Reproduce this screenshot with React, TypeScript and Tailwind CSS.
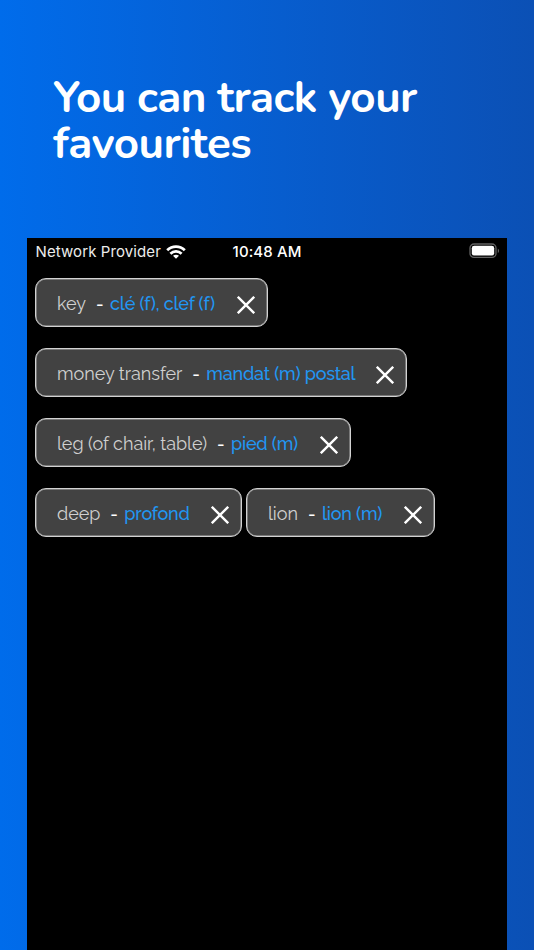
import React from 'react';

interface Favourite {
  word: string;
  translation: string;
  width: string;
}

const rows: Favourite[][] = [
  [{ word: 'key', translation: 'clé (f), clef (f)', width: 'w-[233px]' }],
  [{ word: 'money transfer', translation: 'mandat (m) postal', width: 'w-[372px]' }],
  [{ word: 'leg (of chair, table)', translation: 'pied (m)', width: 'w-[316px]' }],
  [
    { word: 'deep', translation: 'profond', width: 'w-[207px]' },
    { word: 'lion', translation: 'lion (m)', width: 'w-[189px]' },
  ],
];

const WifiIcon = () => (
  <svg viewBox="0 0 20 14" className="ml-[5px] h-[14px] w-[20px]" fill="none" stroke="white" strokeWidth="2.8">
    <path d="M1.2 5.2C6.2.4 13.8.4 18.8 5.2M4.4 8.7c3.2-3 8-3 11.2 0" />
    <path d="M10 13.8l-3-3c1.7-1.5 4.3-1.5 6 0z" fill="white" stroke="none" />
  </svg>
);

const BatteryIcon = () => (
  <svg viewBox="0 0 32 16" className="h-[16px] w-[32px]" fill="none">
    <rect x="1" y="1" width="26" height="13.4" rx="4" stroke="#626262" strokeWidth="1.3" />
    <rect x="2.8" y="2.8" width="22.4" height="9.8" rx="2.4" fill="white" />
    <path d="M28.8 5.4c1.7.8 1.7 3.8 0 4.6z" fill="#626262" />
  </svg>
);

const Chip: React.FC<{ item: Favourite }> = ({ item }) => (
  <div className={`flex h-[49px] shrink-0 items-center rounded-[11px] border border-[#d2d2d2] bg-[#424242] pt-[1px] pl-[21px] text-[18px] whitespace-nowrap inset-shadow-[0_0_0_0.5px_#b0b0b0] ${item.width}`}>
    <span className="tracking-[-0.03px] text-[#d0d0d0]">{item.word}</span>
    <span className="ml-[10px] w-[14px] font-medium text-white">-</span>
    <span className="font-medium tracking-[-0.22px] text-[#2196f3]">{item.translation}</span>
    <svg viewBox="0 0 18 18" className="mt-[4px] mr-[12.5px] ml-auto h-[18px] w-[18px] shrink-0" fill="none" stroke="white" strokeWidth="2.4">
      <path d="M.8.8l16.4 16.4M17.2.8L.8 17.2" />
    </svg>
  </div>
);

const App: React.FC = () => (
  <div className="flex h-[950px] w-[534px] flex-col overflow-hidden bg-linear-to-r from-[#006ceb] to-[#0b50b5]">
    <h1 className="h-[238px] pt-[75px] pl-[53px] font-[Nunito,Lato,sans-serif] text-[44px] leading-[46px] font-bold tracking-[-0.55px] text-white">
      You can track your
      <br />
      favourites
    </h1>
    <main className="mx-[27px] flex-1 bg-black font-[Raleway,Lato,sans-serif]">
      {/* Status Bar */}
      <div className="grid h-[40px] grid-cols-[1fr_auto_1fr] items-start font-[Inter,sans-serif] text-[15px] leading-[27px] text-white">
        <div className="flex items-center pl-[8.5px]">
          <span className="tracking-[0.1px] text-[#ececec]">Network Provider</span>
          <WifiIcon />
        </div>
        <span className="font-medium tracking-[0.1px]">10:48 AM</span>
        <div className="flex justify-end pt-[5px] pr-[6px]">
          <BatteryIcon />
        </div>
      </div>
      {/* Favourites */}
      <div className="flex flex-col gap-[21px] pl-[8px]">
        {rows.map((row) => (
          <div key={row[0].word} className="flex gap-[4px]">
            {row.map((item) => <Chip key={item.word} item={item} />)}
          </div>
        ))}
      </div>
    </main>
  </div>
);

export default App;
